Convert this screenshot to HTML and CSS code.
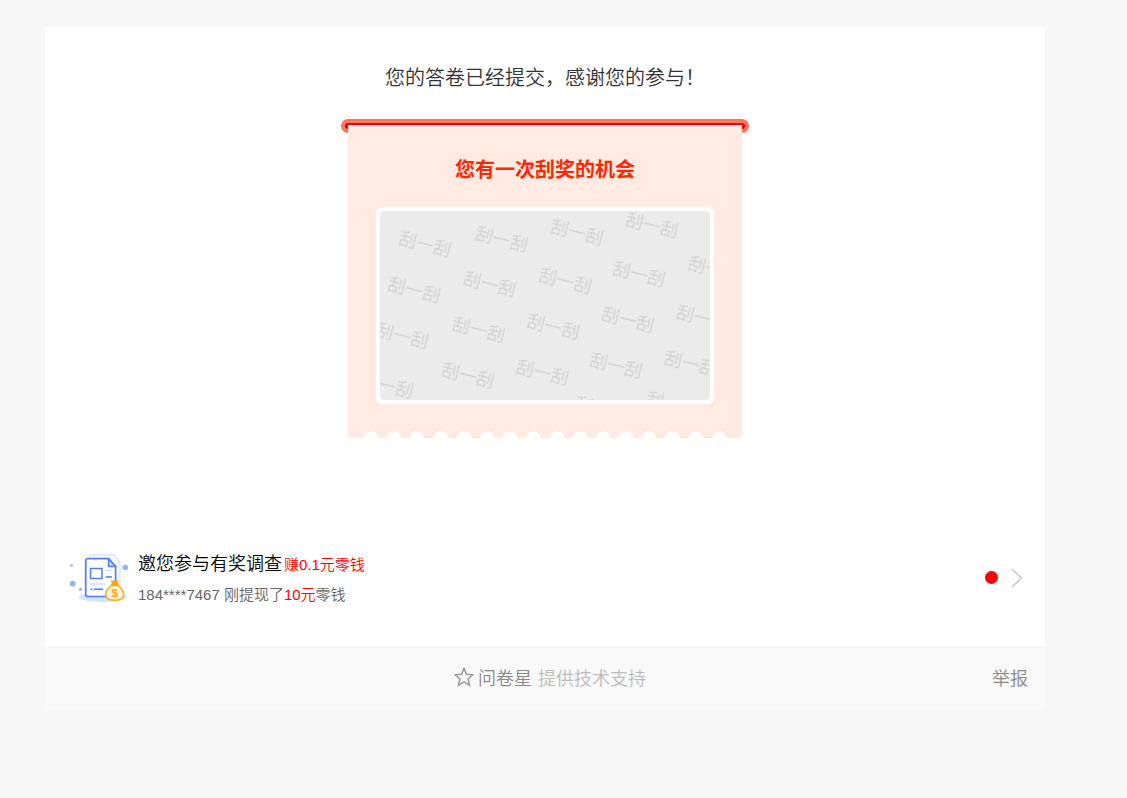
FILE: index.html
```html
<!DOCTYPE html>
<html lang="zh-CN">
<head>
  <meta charset="UTF-8">
  <meta name="viewport" content="width=device-width, initial-scale=1">
  <title>答卷提交成功</title>
  <link rel="stylesheet" href="styles.css">
</head>
<body>

  <div class="container">
    <main class="content">
      <p class="thanks">您的答卷已经提交，感谢您的参与！</p>

      <!-- 刮奖券 -->
      <section class="scratch">
        <div class="slot"></div>
        <div class="ticket">
          <h2>您有一次刮奖的机会</h2>
          <div class="scratch-area">
            <svg viewBox="0 0 331 190" class="scratch-cover">
              <g text-anchor="middle">
                <text transform="translate(45 33) rotate(14)" y="7">刮一刮</text>
                <text transform="translate(122 28) rotate(14)" y="7">刮一刮</text>
                <text transform="translate(198 21) rotate(14)" y="7">刮一刮</text>
                <text transform="translate(273 14) rotate(14)" y="7">刮一刮</text>

                <text transform="translate(34 79) rotate(14)" y="7">刮一刮</text>
                <text transform="translate(110 73) rotate(14)" y="7">刮一刮</text>
                <text transform="translate(186 70) rotate(14)" y="7">刮一刮</text>
                <text transform="translate(260 63) rotate(14)" y="7">刮一刮</text>
                <text transform="translate(336 58) rotate(14)" y="7">刮一刮</text>

                <text transform="translate(22 125) rotate(14)" y="7">刮一刮</text>
                <text transform="translate(99 119) rotate(14)" y="7">刮一刮</text>
                <text transform="translate(174 116) rotate(14)" y="7">刮一刮</text>
                <text transform="translate(249 109) rotate(14)" y="7">刮一刮</text>
                <text transform="translate(324 107) rotate(14)" y="7">刮一刮</text>

                <text transform="translate(7 175) rotate(14)" y="7">刮一刮</text>
                <text transform="translate(88 165) rotate(14)" y="7">刮一刮</text>
                <text transform="translate(163 162) rotate(14)" y="7">刮一刮</text>
                <text transform="translate(237 155) rotate(14)" y="7">刮一刮</text>
                <text transform="translate(312 153) rotate(14)" y="7">刮一刮</text>

                <text transform="translate(222 199) rotate(14)" y="7">刮一刮</text>
                <text transform="translate(294 194) rotate(14)" y="7">刮一刮</text>
              </g>
            </svg>
          </div>
          <div class="teeth">
            <i></i><i></i><i></i><i></i><i></i><i></i><i></i><i></i>
            <i></i><i></i><i></i><i></i><i></i><i></i><i></i><i></i>
          </div>
        </div>
      </section>

      <!-- 有奖调查 -->
      <a href="#" class="survey">
        <svg class="survey-icon" viewBox="0 0 60 50" fill="none">
          <ellipse cx="34" cy="44" rx="24" ry="5" fill="#d5e2fd"/>
          <path d="M21 5V2H45L51 9V40H47" fill="#f7faff" stroke="#d8e4ff" stroke-width="1.3"/>
          <path d="M19 5.7H39.5L46.6 13.5V43.5H19Q16.7 43.5 16.7 41V8Q16.7 5.7 19 5.7Z" fill="#fff" stroke="#4a80f5" stroke-width="1.7"/>
          <path d="M39.5 5.7V13.5H46.6Z" fill="#c4d7ff" stroke="#4a80f5" stroke-width="1.5" stroke-linejoin="round"/>
          <rect x="21.5" y="15.5" width="11.5" height="10" stroke="#4a80f5" stroke-width="1.5"/>
          <path d="M36.5 17.5H43M21.5 31H36" stroke="#d0dfff" stroke-width="1.4"/>
          <path d="M36.5 24H43M21.5 36.2H23.5M25 36.2H34" stroke="#4a80f5" stroke-width="1.6"/>
          <circle cx="2.4" cy="12.4" r="1.6" fill="#a9c5fa"/>
          <circle cx="3.7" cy="30.7" r="2.9" fill="#8fb4fa"/>
          <circle cx="11.5" cy="36.4" r="1.6" fill="#8fb4fa"/>
          <circle cx="56.3" cy="14.4" r="2.7" fill="#8fb4fa"/>
          <path d="M42.5 32.5C39 35 36.5 38 36.7 42C36.9 46 40 47.3 45.7 47.3S54.4 46 54.6 42C54.8 38 52.4 35 49 32.5Z" fill="#fff3d8" stroke="#ffa90c" stroke-width="1.5"/>
          <path d="M41.5 27.2Q43.5 28 45.7 27.2Q48 28 50 27.2L48.4 30.5H49.5V32.8H42V30.5H43.1Z" fill="#ffa90c"/>
          <text x="45.6" y="43.8" text-anchor="middle" class="coin">$</text>
        </svg>
        <span class="survey-text">
          <span class="survey-title">邀您参与有奖调查<em>赚0.1元零钱</em></span>
          <span class="survey-news">184****7467 刚提现了<em>10元</em>零钱</span>
        </span>
        <span class="dot"></span>
        <svg class="arrow" viewBox="0 0 12 20" fill="none">
          <path d="M1 1L10.500 10L1 19" stroke="#c7c7cc" stroke-width="1.500"/>
        </svg>
      </a>
    </main>

    <footer class="footer">
      <a href="#" class="brand">
        <svg class="star" viewBox="0 0 20 20" fill="none">
          <path d="M10 1.400L12.400 7.300L18.800 7.800L14 12L15.600 18.300L10 14.900L4.400 18.300L6 12L1.200 7.800L7.600 7.300Z" stroke="#999" stroke-width="1.500"/>
        </svg>
        <span class="brand-name">问卷星</span>
        <span>提供技术支持</span>
      </a>
      <a href="#" class="report">举报</a>
    </footer>
  </div>

</body>
</html>
```
FILE: styles.css
```css
* {
  box-sizing: border-box;
}

body {
  margin: 0;
  padding: 27px 82px 40px 45px;
  background-color: #f7f7f7;
  font-family: "Liberation Sans", "Noto Sans CJK SC", sans-serif;
  font-weight: 350;
}

a {
  text-decoration: none;
}

em {
  font-style: normal;
  color: #f00;
}

.content {
  background-color: #fff;
  padding: 36px 22px;
}

.thanks {
  margin: 0 0 26px;
  font-size: 20px;
  line-height: 30px;
  text-align: center;
  color: #333;
}

/* 刮奖券 */
.scratch {
  width: 408px;
  margin: 0 auto;
}

.slot {
  height: 14px;
  border: 4px solid #ff7561;
  border-radius: 7px;
  background-color: #f00000;
}

.ticket {
  position: relative;
  width: 394px;
  margin: -8px auto 0;
  padding-top: 30px;
  background-color: #ffebe2;
  border-radius: 0 0 4px 4px;
}

.ticket h2 {
  margin: 0 0 22px;
  font-size: 20px;
  line-height: 30px;
  font-weight: bold;
  text-align: center;
  color: #ff2600;
}

.scratch-area {
  width: 338px;
  height: 197px;
  margin: 0 auto 27px;
  border: 4px solid #fff;
  border-radius: 6px;
  background-color: #fff;
}

.scratch-cover {
  display: block;
  width: 100%;
  height: 100%;
  border-radius: 4px;
  background-color: #ebebeb;
  font-size: 18px;
  font-weight: 400;
  fill: #d4d4d4;
}

.teeth {
  display: flex;
  justify-content: space-between;
  height: 7px;
  padding: 0 16px;
  overflow: hidden;
}

.teeth i {
  width: 14px;
  height: 14px;
  border-radius: 50%;
  background-color: #fff;
}

/* 有奖调查 */
.survey {
  display: flex;
  align-items: center;
  margin-top: 107px;
  padding-left: 2px;
}

.survey-icon {
  width: 60px;
  height: 50px;
  margin-right: 9px;
}

.coin {
  font-size: 11px;
  font-weight: bold;
  fill: #ffa90c;
}

.survey-text {
  flex: 1;
  padding-top: 4px;
}

.survey-title,
.survey-news {
  display: block;
  line-height: 30px;
}

.survey-title {
  font-size: 18px;
  color: #000;
}

.survey-title em {
  margin-left: 2px;
  font-size: 15px;
}

.survey-news {
  font-size: 15px;
  color: #666;
}

.dot {
  width: 13px;
  height: 13px;
  margin-right: 13px;
  border-radius: 50%;
  background-color: #f00;
}

.arrow {
  width: 12px;
  height: 20px;
}

/* 底部 */
.footer {
  position: relative;
  display: flex;
  justify-content: center;
  align-items: center;
  height: 64px;
  padding-bottom: 2px;
  background-color: #f9f9f9;
  font-size: 18px;
}

.brand {
  display: flex;
  align-items: center;
  padding-left: 10px;
  color: #bbb;
}

.star {
  width: 20px;
  height: 20px;
  margin-right: 4px;
}

.brand-name {
  margin-right: 6px;
  color: #888;
}

.report {
  position: absolute;
  right: 17px;
  color: #888;
}
```
